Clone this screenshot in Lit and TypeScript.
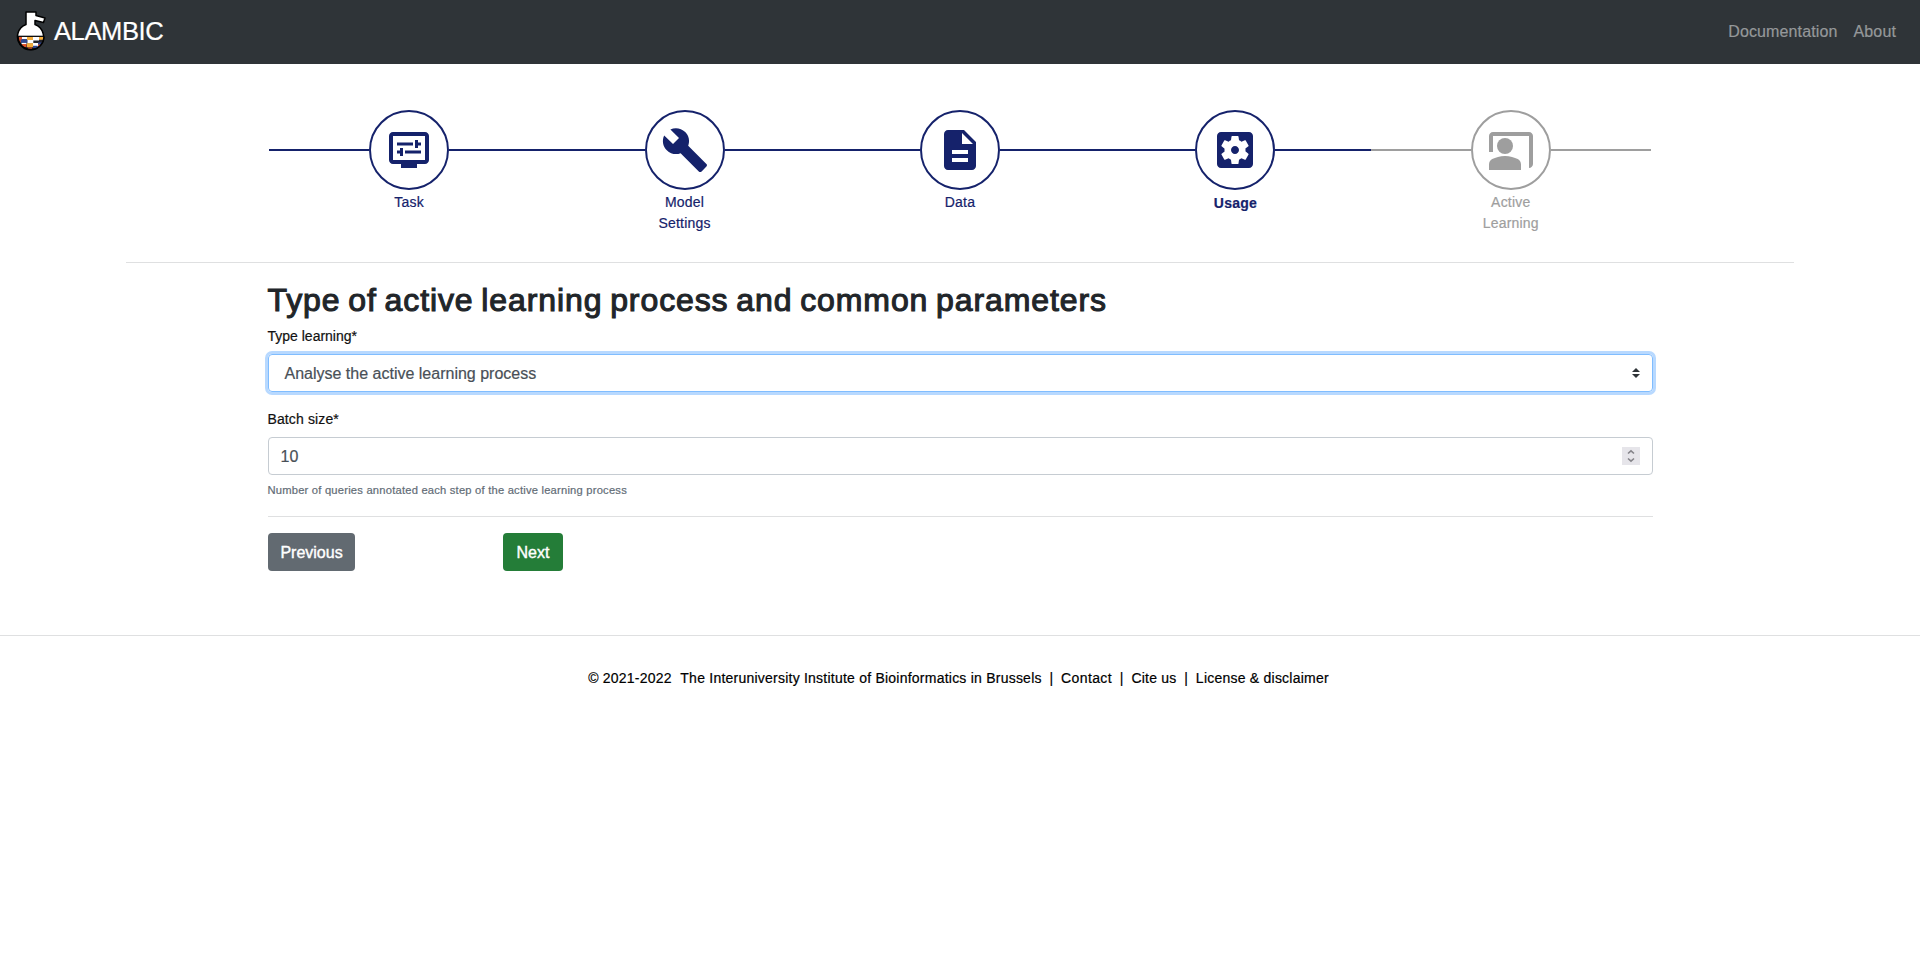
import { LitElement, html, css, svg } from "lit";
import { customElement } from "lit/decorators.js";
import { classMap } from "lit/directives/class-map.js";

const steps = [
  {
    label: "Task",
    state: "done",
    icon: svg`<path d="M20,3H4C2.89,3,2,3.89,2,5v12c0,1.1,0.89,2,2,2h4v2h8v-2h4c1.1,0,2-0.9,2-2V5C22,3.89,21.1,3,20,3z M20,17H4V5h16V17z"/><path d="M6,8.25h8v1.5H6V8.25z M16.5,9.75H18v-1.5h-1.5V7H15v4h1.5V9.75z M10,12.25h8v1.5h-8V12.25z M7.5,15H9v-4H7.5v1.25H6v1.5h1.5V15z"/>`,
  },
  {
    label: "Model Settings",
    state: "done",
    icon: svg`<path d="M22.7 19l-9.1-9.1c.9-2.3.4-5-1.5-6.9-2-2-5-2.4-7.4-1.3L9 6 6 9 1.6 4.7C.4 7.1.9 10.1 2.9 12.1c1.9 1.9 4.6 2.4 6.9 1.5l9.1 9.1c.4.4 1 .4 1.4 0l2.3-2.3c.5-.4.5-1.1.1-1.4z"/>`,
  },
  {
    label: "Data",
    state: "done",
    icon: svg`<path d="M14 2H6c-1.1 0-1.99.9-1.99 2L4 20c0 1.1.89 2 1.99 2H18c1.1 0 2-.9 2-2V8l-6-6zm2 16H8v-2h8v2zm0-4H8v-2h8v2zm-3-5V3.5L18.5 9H13z"/>`,
  },
  {
    label: "Usage",
    state: "current",
    icon: svg`<path d="M12 10c-1.1 0-2 .9-2 2s.9 2 2 2 2-.9 2-2-.9-2-2-2zm7-7H5c-1.11 0-2 .9-2 2v14c0 1.1.89 2 2 2h14c1.11 0 2-.9 2-2V5c0-1.1-.89-2-2-2zm-1.75 9c0 .23-.02.46-.05.68l1.48 1.16c.13.11.17.3.08.45l-1.4 2.42c-.09.15-.27.21-.43.15l-1.74-.7c-.36.28-.76.51-1.18.69l-.26 1.85c-.03.17-.18.3-.35.3h-2.8c-.17 0-.32-.13-.35-.29l-.26-1.85c-.43-.18-.82-.41-1.18-.69l-1.74.7c-.16.06-.34 0-.43-.15l-1.4-2.42c-.09-.15-.05-.34.08-.45l1.48-1.16c-.03-.23-.05-.46-.05-.69 0-.23.02-.46.05-.68l-1.48-1.16c-.13-.11-.17-.3-.08-.45l1.4-2.42c.09-.15.27-.21.43-.15l1.74.7c.36-.28.76-.51 1.18-.69l.26-1.85c.03-.17.18-.3.35-.3h2.8c.17 0 .32.13.35.29l.26 1.85c.43.18.82.41 1.18.69l1.74-.7c.16-.06.34 0 .43.15l1.4 2.42c.09.15.05.34-.08.45l-1.48 1.16c.03.23.05.46.05.69z"/>`,
  },
  {
    label: "Active Learning",
    state: "pending",
    icon: svg`<path d="M21 3H3c-1.1 0-2 .9-2 2v8h2V5h18v16c1.1 0 2-.9 2-2V5c0-1.1-.9-2-2-2z"/><circle cx="9" cy="10" r="4"/><path d="M15.39 16.56C13.71 15.7 11.53 15 9 15s-4.71.7-6.39 1.56C1.61 17.07 1 18.1 1 19.22V22h16v-2.78c0-1.12-.61-2.15-1.61-2.66z"/>`,
  },
];

@customElement("app-root")
export class AppRoot extends LitElement {
  static styles = css`
    :host {
      display: block;
      min-height: 965px;
      background: #fff;
      color: #212529;
      font: 16px/24px "Liberation Sans", Arial, sans-serif;
      -webkit-text-stroke: 0.2px currentColor;
    }
    * { box-sizing: border-box; }
    .nav {
      display: flex;
      align-items: center;
      height: 64px;
      padding: 0 24px 0 16px;
      background: #2f3438;
    }
    .logo { width: 30px; height: 42px; }
    .brand { margin: 0 auto 2px 8px; color: #fff; font-size: 25.6px; line-height: 38px; letter-spacing: -0.45px; }
    .link { margin-left: 16px; color: #95989a; letter-spacing: 0.13px; }
    .steps { display: flex; margin: 46px 0 0 269.15px; height: 152px; }
    .step { display: flex; flex-direction: column; align-items: center; width: 280px; margin-right: -4.6px; flex: none; color: #15226b; }
    .pending { color: #9e9e9e; }
    .rail { display: flex; align-items: center; width: 100%; }
    .line { flex: 1; height: 2px; background: currentColor; }
    .circle { display: flex; align-items: center; justify-content: center; width: 80px; height: 80px; border: 2px solid currentColor; border-radius: 50%; }
    .icon { width: 48px; height: 48px; fill: currentColor; }
    .label { width: 80px; text-align: center; font-size: 14px; line-height: 21px; margin-top: 2px; letter-spacing: 0.2px; }
    .current .label { font-weight: bold; margin-top: 3px; }
    .rule { height: 1px; background: #dfe0e1; }
    .wide { margin: 0 126px; }
    .form { display: flex; flex-direction: column; margin: 0 267px 0 268px; }
    .title { margin: 18px 0 0 -0.5px; font-size: 32px; line-height: 38px; font-weight: 400; letter-spacing: 0.9px; word-spacing: -2px; -webkit-text-stroke: 1.1px currentColor; white-space: nowrap; }
    .field { margin-left: -0.5px; font-size: 14px; line-height: 21px; color: #111; margin-top: 7px; }
    .batch { margin-top: 17px; letter-spacing: 0.12px; }
    .control { display: flex; align-items: center; justify-content: space-between; height: 38px; border: 1px solid #c6ccd2; border-radius: 4px; color: #495057; margin-top: 7px; }
    .value { padding-top: 2px; }
    .select { border-color: #80bdff; box-shadow: 0 0 0 3px #b8d9ff; padding: 0 12px 0 15.5px; }
    .number { padding: 0 12px 0 11.5px; }
    .arrows { width: 8px; height: 10px; fill: #2f3438; }
    .spin { width: 18px; height: 18px; background: #e6e5ea; fill: none; stroke: #85848a; stroke-width: 1.6; }
    .help { margin: 7px 0 17px -0.5px; font-size: 11.2px; line-height: 17px; color: #626c76; letter-spacing: 0.21px; }
    .actions { display: flex; margin-top: 16px; }
    .btn { height: 38px; padding: 2px 0 0; border: 0; border-radius: 4px; color: #fff; font: inherit; -webkit-text-stroke: 0.4px #fff; }
    .prev { width: 87px; background: #626a71; }
    .next { width: 60px; margin-left: 148px; background: #247d38; }
    .end { margin-top: 64px; }
    .foot { display: flex; justify-content: center; padding-right: 3px; font-size: 14px; line-height: 21px; color: #000; margin-top: 32px; white-space: pre; letter-spacing: 0.23px; }
    .bar { width: 19.3px; text-align: center; }
    .year { margin-right: 8.5px; }
    .contact { letter-spacing: 0.4px; }
  `;

  render() {
    return html`
      <nav class="nav">
        <svg class="logo" viewBox="0 0 30 42">
          <defs><clipPath id="bowl"><path d="M2 25.500H28A13 13 0 0 1 2 25.500z"/></clipPath></defs>
          <path d="M10 1H20V4.500L29 7L27.500 11.500L19 9.500V13.500A13 13 0 1 1 10 13.500z" fill="#fff" stroke="#000" stroke-width="1.500" stroke-linejoin="round"/>
          <g clip-path="url(#bowl)">
            <path d="M1 25H29V40H1z" fill="#24242c"/>
            <path d="M6 26h5.500v2.300H6zM17 26h6v3.500h-6zM11.300 28h6v4.500h-6zM5.500 31.500h5v2h-5zM17 32h5v3.500h-5z" fill="#fff"/>
            <path d="M4.700 28.300h6.600v3.500H4.700zM17 34.800h4.500v2.200H17zM22 31.500h5v2.500h-5z" fill="#2e4690"/>
            <path d="M11 26h6v3h-6zM11 32.300h6v4h-6zM23 26h5v2.800h-5z" fill="#f5ad3a"/>
            <path d="M2 26h4v2.500H2zM2 28.500h2.700v3.300H2zM5.500 33h5v3h-5zM12 36.500h4v2h-4zM22 33.500h3v2h-3z" fill="#e0532c"/>
          </g>
          <path d="M2 25.300H28" stroke="#000" stroke-width="1.200"/>
          <path d="M2 25.500A13 13 0 0 0 28 25.500" fill="none" stroke="#000" stroke-width="1.600"/>
        </svg>
        <span class="brand">ALAMBIC</span>
        <span class="link">Documentation</span>
        <span class="link">About</span>
      </nav>
      <div class="steps">
        ${steps.map(
          (s) => html`<div class=${classMap({ step: true, [s.state]: true })}>
            <div class="rail">
              <span class="line"></span>
              <span class="circle"><svg class="icon" viewBox="0 0 24 24">${s.icon}</svg></span>
              <span class="line"></span>
            </div>
            <div class="label">${s.label}</div>
          </div>`
        )}
      </div>
      <div class="rule wide"></div>
      <main class="form">
        <h2 class="title">Type of active learning process and common parameters</h2>
        <label class="field">Type learning*</label>
        <div class="control select">
          <span class="value">Analyse the active learning process</span>
          <svg class="arrows" viewBox="0 0 8 10"><path d="M4 0L8 4H0zM4 10L8 6H0z"/></svg>
        </div>
        <label class="field batch">Batch size*</label>
        <div class="control number">
          <span class="value">10</span>
          <svg class="spin" viewBox="0 0 18 18"><path d="M6 6.500L9 3.800L12 6.500M6 11.500L9 14.200L12 11.500"/></svg>
        </div>
        <span class="help">Number of queries annotated each step of the active learning process</span>
        <div class="rule"></div>
        <div class="actions">
          <button class="btn prev">Previous</button>
          <button class="btn next">Next</button>
        </div>
      </main>
      <div class="rule end"></div>
      <footer class="foot">
        <span class="year">© 2021-2022</span><span>The Interuniversity Institute of Bioinformatics in Brussels</span><span class="bar">|</span><span class="contact">Contact</span><span class="bar">|</span><span>Cite us</span><span class="bar">|</span><span>License &amp; disclaimer</span>
      </footer>
    `;
  }
}
